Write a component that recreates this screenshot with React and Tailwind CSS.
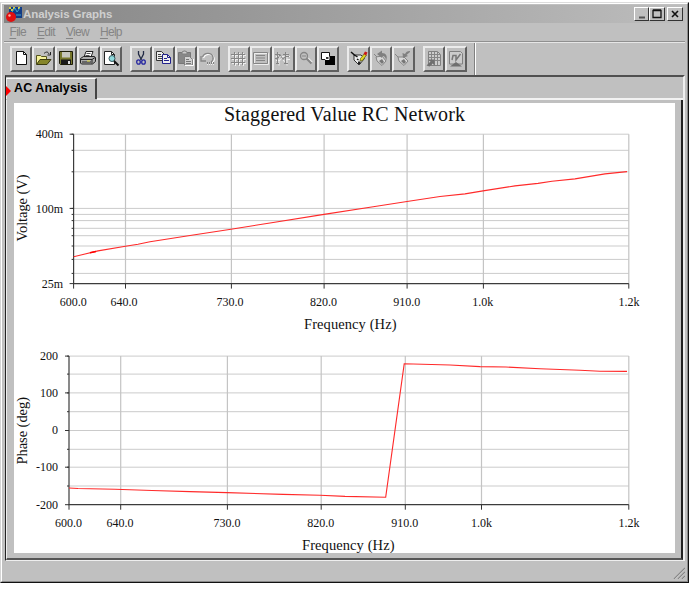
import clsx from 'clsx';

const menus = ['File', 'Edit', 'View', 'Help'];

const NewIcon = () => (
  <>
    <path d="M4.5 1.5h7l3 3v10h-10z" fill="#fff" stroke="#111" />
    <path d="M11.5 1.5v3h3" fill="none" stroke="#111" />
  </>
);

const OpenIcon = () => (
  <>
    <path d="M1.5 14V5.5h4l1 1h5v3" fill="#f5f19a" stroke="#55551c" />
    <path d="M1.5 14.5l3.5-5h11l-4 5z" fill="#85852a" stroke="#3b3b10" />
    <path d="M9 3.5c2-2 4-2 5 .5m1.5-2v3h-3" fill="none" stroke="#222" />
  </>
);

const SaveIcon = () => (
  <>
    <path d="M2.5 1.5h13v13h-12l-1-1z" fill="#77772c" stroke="#1c1c08" />
    <path d="M5 2h8v5.5H5z" fill="#c6c6bd" />
    <path d="M4 9.5h10V14H4z" fill="#1a1a1a" />
    <path d="M11 11h2v3h-2z" fill="#ddd" />
  </>
);

const PrintIcon = () => (
  <>
    <path d="M5 7l2-5.5h7L12 7z" fill="#fff" stroke="#222" />
    <path d="M7.5 3.5h4m-5 2h4" stroke="#555" />
    <path d="M1.5 8.5l3-2h11l1 1v4l-3 2.5h-11l-1-1z" fill="#aaa" stroke="#222" />
    <path d="M2 9.5h11l3-2m-3 2v4M3 12h9" fill="none" stroke="#222" />
    <path d="M8 11h3" stroke="#e8e34c" />
  </>
);

const PreviewIcon = () => (
  <>
    <path d="M2.5 1.5h7l3 3v10h-10z" fill="#fff" stroke="#222" />
    <path d="M9.5 1.5v3h3" fill="none" stroke="#222" />
    <circle cx="10" cy="8.5" r="3" fill="#8fd9dc" stroke="#35585c" />
    <path d="M12 11l4.5 4.5" stroke="#111" strokeWidth="2" />
  </>
);

const CutIcon = () => (
  <>
    <path d="M6.5 1v3l3 6m2-9v3l-3 6" fill="none" stroke="#222b45" strokeWidth="1.3" />
    <ellipse cx="6.5" cy="12" rx="1.8" ry="2.2" fill="none" stroke="#2525a0" strokeWidth="1.3" />
    <ellipse cx="11.5" cy="12" rx="1.8" ry="2.2" fill="none" stroke="#2525a0" strokeWidth="1.3" />
  </>
);

const CopyIcon = () => (
  <>
    <path d="M1.5 1.5h5l2.5 2.5v6.5H1.5z" fill="#eee" stroke="#333" />
    <path d="M3 4.5h3m-3 2h4m-4 2h4" stroke="#444" />
    <path d="M7.5 4.5h5l3 3v6h-8z" fill="#eee" stroke="#22228c" />
    <path d="M12.5 4.5v3h3M9 8.5h3m-3 2h5" fill="none" stroke="#22228c" />
  </>
);

const PasteIcon = () => (
  <>
    <path d="M1.5 2.5h12v11h-12z" fill="#888" stroke="#777" />
    <path d="M5 4V2l2-1h1l2 1v2z" fill="#ccc" stroke="#808080" />
    <path d="M7.5 6.5h5l3 3v5.5h-8z" fill="#d2d2d2" stroke="#808080" />
    <path d="M9 9.5h3m-3 2h5m-5 2h5" stroke="#777" />
    <path d="M16.5 9v6.5H8" fill="none" stroke="#fff" />
  </>
);

const UndoIcon = () => (
  <>
    <path d="M3.5 7c2-5 9-4.5 10.5 0 .5 2-.5 4-2 5" fill="none" stroke="#fff" strokeWidth="1.3" transform="translate(1 1)" />
    <path d="M3.5 7c2-5 9-4.5 10.5 0 .5 2-.5 4-2 5M2 6v5h5" fill="none" stroke="#858585" strokeWidth="1.3" />
    <path d="M8 14.5h8" stroke="#eee" strokeWidth="1" strokeDasharray="1 1" />
    <path d="M8 13h8" stroke="#808080" strokeWidth="2" strokeDasharray="1 1" />
  </>
);

const GridIcon = () => (
  <>
    <path d="M2 5.5h14M2 9.5h14M2 13.5h14M5.5 3v13M9.5 3v13M13.5 3v13" stroke="#eee" />
    <path d="M1 4.5h14M1 8.5h14M1 12.5h14M4.5 2v13M8.5 2v13M12.5 2v13" stroke="#858585" />
  </>
);

const LegendIcon = () => (
  <>
    <path d="M2.5 3.5h14v11h-14z" fill="none" stroke="#eee" />
    <path d="M1.5 2.5h14v11h-14zM4 5.5h9m-9 2.5h9m-9 2.5h9" fill="none" stroke="#858585" />
  </>
);

const CursorsIcon = () => (
  <>
    <path d="M4 2.5v12m8-12v12M1 5.5h14M1 9.5h4l2-3 2 4 3-2h3" fill="none" stroke="#eee" transform="translate(1 1)" />
    <path d="M3.5 2v12m8-12v12M1 4.5h5m3 0h6M1 8.5h3l2-4 3 5 2-3h4M2 13.5h3m5 0h4" fill="none" stroke="#858585" />
  </>
);

const ZoomOutIcon = () => (
  <>
    <circle cx="7" cy="6" r="3.5" fill="none" stroke="#858585" strokeWidth="1.3" />
    <path d="M5 6h4" stroke="#858585" />
    <path d="M11 8.5l4 4" stroke="#eee" strokeWidth="2" />
    <path d="M9.5 8.5l5 5" stroke="#858585" strokeWidth="2" />
  </>
);

const OverlayIcon = () => (
  <>
    <path d="M6 6h10v9H6z" fill="#000" />
    <path d="M2.5 2.5h8v7h-8z" fill="#fff" stroke="#111" />
    <path d="M6.5 6.5h3.5v3H6.5z" fill="#333" stroke="#fff" />
  </>
);

const TagPencilIcon = () => (
  <>
    <path d="M4 5h7l3.5 3.5L9 15l-5-5z" fill="#eee" stroke="#333" />
    <path d="M1 2l4 3.5M4.5 5l3 2M7 9l1.5 1" fill="none" stroke="#111" strokeWidth="1.5" />
    <path d="M8 11.5h2.5V14H8z" fill="#222" />
    <path d="M10 11l.5-2.5 4-5 2 1.5-4 5.5z" fill="#e0d820" stroke="#55500f" strokeWidth=".7" />
    <path d="M13.5 4l1.5-2.5 2.5 1L16 5.5z" fill="#c81818" />
  </>
);

const TagUndoIcon = () => (
  <>
    <path d="M2 4l3 3M4 7l6-1 4 5-4 4.5L5 11z" fill="#d8d8d8" stroke="#858585" />
    <path d="M7 11l3-2 2 3-2 2z" fill="#777" />
    <path d="M5 4l5-3.5V3c4 0 6 3 4 8 0-3-1-5-4-5v2z" fill="#808080" />
  </>
);

const TagCheckIcon = () => (
  <>
    <path d="M1 4l3 3M4 7h6l4 4-4 4.5L5 11z" fill="#d8d8d8" stroke="#858585" />
    <path d="M7 11l3-2 2 3-2 2z" fill="#777" />
    <path d="M16 1c-3 0-4 1-5 3L8.5 3 9 8l5-2-1.5-1L16 2z" fill="#808080" />
  </>
);

const ExportGridIcon = () => (
  <>
    <path d="M3.5 1.5h9l3 3v11h-12z" fill="#ccc" stroke="#808080" />
    <path d="M4 4.5h11M4 7.5h11M4 10.5h11M6.5 2v13M9.5 2v13M12.5 2v13" stroke="#858585" />
    <path d="M1.5 15.5l4-4-2-2h6v6l-2-2-3 3z" fill="#6f6f6f" />
  </>
);

const ExportGraphIcon = () => (
  <>
    <path d="M2.5 1.5h11l2 2V14h-13z" fill="#ccc" stroke="#808080" />
    <path d="M5 10l1-4.5h3V10l4.5-6" fill="none" stroke="#777" strokeWidth="1.5" />
    <path d="M3 16.5l6-4.5 6 4.5z" fill="#6f6f6f" />
  </>
);

const toolGroups = [
  [NewIcon, OpenIcon, SaveIcon, PrintIcon, PreviewIcon],
  [CutIcon, CopyIcon, PasteIcon, UndoIcon],
  [GridIcon, LegendIcon, CursorsIcon, ZoomOutIcon, OverlayIcon],
  [TagPencilIcon, TagUndoIcon, TagCheckIcon],
  [ExportGridIcon, ExportGraphIcon],
];

const ToolButton = ({ icon: Icon }) => (
  <button className="w-[22.4px] h-[26px] flex items-center justify-center border-t-2 border-l-2 border-t-[#ebebeb] border-l-[#ebebeb] border-r-2 border-b-2 border-r-[#606060] border-b-[#606060]">
    <svg width="18" height="18" viewBox="0 0 18 18" className="shrink-0">
      <Icon />
    </svg>
  </button>
);

const CaptionButton = ({ className, children }) => (
  <button className={clsx('h-[14px] border border-t-white border-l-white border-r-[#333] border-b-[#333] bg-[#c0c0c0] flex items-center justify-center', className)}>
    <svg width="12" height="12" viewBox="0 0 12 12" fill="none" stroke="#111" className="shrink-0">
      {children}
    </svg>
  </button>
);

const voltage = {
  left: 73.6, right: 628.8, top: 134.2, bottom: 283.6,
  rows: [134.2, 150.3, 171.8, 208.4, 214.4, 220.6, 228.3, 235.7, 246, 259.4, 273.4],
  major: [134.2, 208.4, 283.6],
  cols: [125.5, 231.4, 324.1, 407.1, 483.4, 628.8],
  yLabels: [['400m', 138.3], ['100m', 212.7], ['25m', 288]],
  yLabelX: 63,
  xLabels: [['600.0', 73.3], ['640.0', 124], ['730.0', 230], ['820.0', 323.6], ['910.0', 406.7], ['1.0k', 482.8], ['1.2k', 629]],
  xLabelY: 306.3,
  title: ['Frequency (Hz)', 304, 328.6],
  yTitle: ['Voltage (V)', 241.5, 67],
  line: '73.6,256.8 84,254.3 98,250.9 125.5,246.3 138,244.2 150,241.8 190,235.5 231,229.2 270,223 324,214.4 370,207.3 407,201.5 440,196.5 465,193.9 483,190.9 515,185.9 538,183.4 552,181.3 575,178.9 605,173.9 627,171.6',
};

const phase = {
  left: 69, right: 628.8, top: 356.1, bottom: 504.7,
  rows: [356.1, 374.1, 392.9, 411.7, 430.5, 449.3, 467.2, 486],
  major: [356.1, 392.9, 430.5, 467.2, 504.7],
  cols: [120.7, 227.4, 321.2, 405.3, 481.5, 628.8],
  yLabels: [['200', 359.7], ['100', 397], ['0', 434.3], ['-100', 471.3], ['-200', 508.6]],
  yLabelX: 58,
  xLabels: [['600.0', 68.5], ['640.0', 120], ['730.0', 227], ['820.0', 320.7], ['910.0', 404.8], ['1.0k', 481.5], ['1.2k', 629]],
  xLabelY: 527.4,
  title: ['Frequency (Hz)', 302, 549.7],
  yTitle: ['Phase (deg)', 464.5, 67.5],
  line: '69,488 78,488.5 115,489.2 152,490.5 190,491.6 227,492.6 283,494.4 320,495.3 345,496.4 385.7,497.2 404.2,363.8 450,365 480,366.6 506,367 540,368.7 580,370.3 600,371.3 627,371.4',
};

const Chart = ({ data }) => (
  <g>
    {data.rows.map(y => (
      <line key={y} x1={data.left} x2={data.right} y1={y} y2={y} stroke="#cbcbcb" />
    ))}
    {data.cols.map(x => (
      <line key={x} x1={x} x2={x} y1={data.top} y2={data.bottom} stroke="#c4c4c4" strokeWidth="1.2" />
    ))}
    {/* axes and ticks */}
    <path d={`M${data.left} ${data.top}V${data.bottom}H${data.right}`} fill="none" stroke="#3c3c3c" strokeWidth="1.2" />
    {data.rows.map(y => (
      <line key={y} x1={data.left - 2} x2={data.left} y1={y} y2={y} stroke="#333" />
    ))}
    {data.major.map(y => (
      <line key={y} x1={data.left - 4} x2={data.left} y1={y} y2={y} stroke="#333" />
    ))}
    {[data.left, ...data.cols].map(x => (
      <line key={x} x1={x} x2={x} y1={data.bottom} y2={data.bottom + 5} stroke="#333" />
    ))}
    <polyline points={data.line} fill="none" stroke="#ff2a2a" strokeWidth="1.1" />

    {data.yLabels.map(([label, y]) => (
      <text key={label} x={data.yLabelX} y={y} textAnchor="end">{label}</text>
    ))}
    {data.xLabels.map(([label, x]) => (
      <text key={label} x={x} y={data.xLabelY} textAnchor="middle">{label}</text>
    ))}
    <text x={data.title[1]} y={data.title[2]} textLength="92.5" className="text-[14.5px]">{data.title[0]}</text>
    <text transform={`translate(27.3 ${data.yTitle[1]}) rotate(-90)`} textLength={data.yTitle[2]} className="text-[14.5px]">
      {data.yTitle[0]}
    </text>
  </g>
);

export default function App() {
  return (
    <div className="w-[692px] h-[590px] bg-white pt-[2px] overflow-hidden font-['Liberation_Sans',Arial,sans-serif]">
      <div className="w-[689px] h-[581px] bg-[#c0c0c0] border border-t-[#dcdcdc] border-l-[#d4d4d4] border-r-[#111] border-b-[#111]">
        <div className="h-full border border-t-white border-l-white border-r-[#8a8a8a] border-b-[#8a8a8a] flex flex-col pt-px">
          {/* Title bar */}
          <div className="h-[18px] shrink-0 ml-[2px] mr-[2px] flex items-center bg-linear-to-r from-[#858585] to-[#bdbdbd] pr-[2px]">
            <svg width="18" height="18" viewBox="0 0 18 18" className="shrink-0">
              <path d="M5 2h13v11H5z" fill="#123c86" />
              <path d="M5 2h2v2H5zM9 2h2v2H9zM14 2h2v2h-2zM7 4h2v2H7z" fill="#d3cc45" />
              <path d="M8 7l3-4 2 4 3-4M12 10h5" fill="none" stroke="#3ca5c8" />
              <circle cx="7" cy="12" r="5" fill="#e01010" />
              <circle cx="5.5" cy="10.5" r="1.2" fill="#ffb0a0" />
            </svg>
            <span className="flex-1 pl-px pt-px text-[11.5px] font-bold tracking-[-0.1px] text-[#cfcfcf] whitespace-nowrap">Analysis Graphs</span>
            <CaptionButton className="w-[15px]"><path d="M3 9.5h6" strokeWidth="2" stroke="#555" /></CaptionButton>
            <CaptionButton className="w-[16px]"><path d="M2 2.5h8v7H2zM2 2h8" strokeWidth="1.3" /></CaptionButton>
            <CaptionButton className="w-[16px] ml-[2px]"><path d="M3 3l6 6m0-6l-6 6" strokeWidth="1.6" /></CaptionButton>
          </div>

          {/* Menu */}
          <div className="h-[18px] shrink-0 pl-[7.5px] flex items-center gap-[11px] text-[12px] text-[#858585]">
            {menus.map(menu => (
              <span key={menu} className="leading-none tracking-[-0.7px]">
                <span className="underline underline-offset-2">{menu[0]}</span>{menu.slice(1)}
              </span>
            ))}
          </div>

          {/* Toolbar */}
          <div className="h-[34px] shrink-0 mx-[2px] border-t border-t-[#909090]">
            <div className="h-[33px] w-full border-t border-t-[#e6e6e6] flex">
              <div className="w-[471px] border-r border-r-[#808080] flex gap-[8px] pl-[6px] pt-[3px]">
                {toolGroups.map((group, i) => (
                  <div key={i} className="flex">
                    {group.map((icon, j) => <ToolButton key={j} icon={icon} />)}
                  </div>
                ))}
              </div>
              <div className="w-px bg-white" />
            </div>
          </div>

          {/* Tabbed page */}
          <div className="h-[486px] shrink-0 ml-[3px] mr-[2px] border-l border-t-2 border-r-2 border-b border-l-[#222] border-t-[#505050] border-r-[#eee] border-b-[#eee] flex flex-col">
            <div className="h-[23px] shrink-0 flex">
              <div className="w-[91px] border-t border-l border-r-2 border-t-white border-l-[#eee] border-r-[#444] mt-px h-[21px] flex items-center">
                <svg width="5" height="10" viewBox="0 0 5 10" className="shrink-0 mt-[3px] -ml-px">
                  <path d="M0 0l5 5-5 5z" fill="#f00" />
                </svg>
                <span className="pl-[3px] pb-[2px] text-[12.5px] font-bold tracking-[0.1px] text-black whitespace-nowrap">AC Analysis</span>
              </div>
              <div className="flex-1 border-b-2 border-b-[#f2f2f2]" />
            </div>
            <div className="flex-1 border-l border-l-[#eee] border-r-2 border-b-2 border-r-[#222] border-b-[#555] pt-[3px] pl-[7px]">
              <svg
                width="661" height="450" viewBox="14 103 661 450"
                className="block bg-white text-[12px] font-['Liberation_Serif','Times_New_Roman',serif]"
                fill="#111"
              >
                <text x="224" y="121" textLength="241" className="text-[20px]">Staggered Value RC Network</text>
                <Chart data={voltage} />
                <path d="M90 252.7l6-1.2" stroke="#f00" strokeWidth="1.5" />
                <Chart data={phase} />
              </svg>
            </div>
          </div>

          {/* Status bar */}
          <div className="flex-1 flex justify-end items-end pr-[2px] pb-[2px]">
            <svg width="12" height="12" viewBox="0 0 12 12">
              <path d="M2 12L12 2M6 12l6-6M10 12l2-2" stroke="#eee" />
              <path d="M1 12L12 1M5 12l7-7M9 12l3-3" stroke="#888" strokeWidth="1.3" />
            </svg>
          </div>
        </div>
      </div>
    </div>
  );
}
